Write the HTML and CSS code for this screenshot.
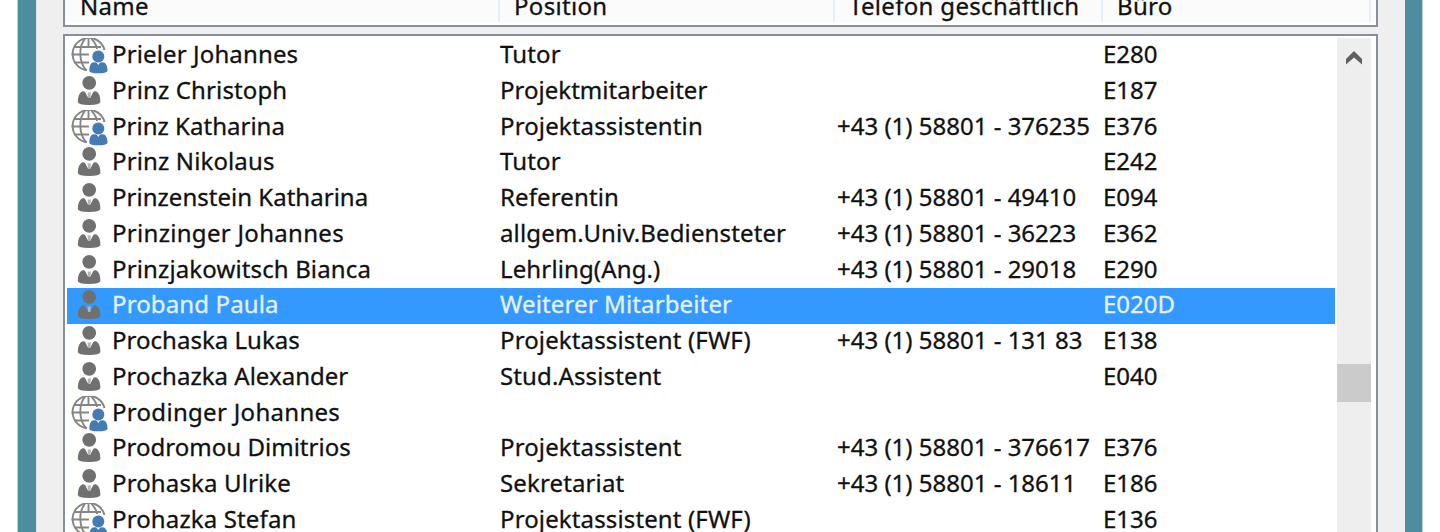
FILE: index.html
```
<!DOCTYPE html>
<html lang="de">
<head>
<meta charset="utf-8">
<title>Adressbuch</title>
<link rel="stylesheet" href="styles.css">
</head>
<body>
<svg class="symbols" width="0" height="0">
  <symbol id="person" viewBox="0 0 40 36">
    <circle cx="19.200" cy="8.800" r="6.900" fill="#707070"/>
    <path d="M12.500 17.300 Q14.500 16.900 15.300 18.500 L18 23.500 H20.400 L23 18.500 Q24 16.900 26 17.300 Q30.400 19.500 30.400 28 Q29.800 31 19.200 31 Q8.200 31 7.800 28 Q7.800 19.500 12.500 17.300Z" fill="#707070"/>
    <path d="M17.500 18.500 H21 L20.300 24 H18.200Z" fill="#b5b5b5"/>
  </symbol>
  <symbol id="contact" viewBox="0 0 40 36">
    <g fill="none" stroke="#858585" stroke-width="1.900">
      <path d="M34.500 12 A16.200 16.200 0 1 0 17 32.200"/>
      <path d="M15 0.800 C8.500 8 8.500 24 16.500 32.500 M21.500 0.800 Q26.500 6 27 11 M18.500 0.500 V10"/>
      <path d="M5 9 H31 M1.500 16.500 H19 M4.500 24.500 H19"/>
    </g>
    <circle cx="28.300" cy="18.600" r="6" fill="#447bb3"/>
    <path d="M22.500 24.500 Q25 24 26.500 24.500 L28.300 27 L30.200 24.500 Q32 24 34 24.500 Q37.500 26 37.500 33 Q36.500 35.300 28.300 35.300 Q20 35.300 19.300 33 Q19.300 26 22.500 24.500Z" fill="#447bb3"/>
  </symbol>
</svg>
<div class="window">
  <div class="header">
    <span>Name</span><span>Position</span><span>Telefon geschäftlich</span><span>Büro</span>
  </div>
  <div class="list">
    <div class="rows">
      <div class="row"><svg class="icon"><use href="#contact"/></svg><span>Prieler Johannes</span><span>Tutor</span><span></span><span class="num">E280</span></div>
      <div class="row"><svg class="icon"><use href="#person"/></svg><span>Prinz Christoph</span><span class="tight">Projektmitarbeiter</span><span></span><span class="num">E187</span></div>
      <div class="row"><svg class="icon"><use href="#contact"/></svg><span class="tight">Prinz Katharina</span><span>Projektassistentin</span><span class="num">+43 (1) 58801 - 376235</span><span class="num">E376</span></div>
      <div class="row"><svg class="icon"><use href="#person"/></svg><span>Prinz Nikolaus</span><span>Tutor</span><span></span><span class="num">E242</span></div>
      <div class="row"><svg class="icon"><use href="#person"/></svg><span class="tight">Prinzenstein Katharina</span><span>Referentin</span><span class="num">+43 (1) 58801 - 49410</span><span class="num">E094</span></div>
      <div class="row"><svg class="icon"><use href="#person"/></svg><span class="wide">Prinzinger Johannes</span><span>allgem.Univ.Bediensteter</span><span class="num">+43 (1) 58801 - 36223</span><span class="num">E362</span></div>
      <div class="row"><svg class="icon"><use href="#person"/></svg><span>Prinzjakowitsch Bianca</span><span>Lehrling(Ang.)</span><span class="num">+43 (1) 58801 - 29018</span><span class="num">E290</span></div>
      <div class="row selected"><svg class="icon"><use href="#person"/></svg><span>Proband Paula</span><span>Weiterer Mitarbeiter</span><span></span><span class="num">E020D</span></div>
      <div class="row"><svg class="icon"><use href="#person"/></svg><span class="tight">Prochaska Lukas</span><span>Projektassistent (FWF)</span><span class="num">+43 (1) 58801 - 131 83</span><span class="num">E138</span></div>
      <div class="row"><svg class="icon"><use href="#person"/></svg><span class="tight">Prochazka Alexander</span><span>Stud.Assistent</span><span></span><span class="num">E040</span></div>
      <div class="row"><svg class="icon"><use href="#contact"/></svg><span class="wide">Prodinger Johannes</span><span></span><span></span><span></span></div>
      <div class="row"><svg class="icon"><use href="#person"/></svg><span class="tight">Prodromou Dimitrios</span><span>Projektassistent</span><span class="num">+43 (1) 58801 - 376617</span><span class="num">E376</span></div>
      <div class="row"><svg class="icon"><use href="#person"/></svg><span>Prohaska Ulrike</span><span>Sekretariat</span><span class="num">+43 (1) 58801 - 18611</span><span class="num">E186</span></div>
      <div class="row"><svg class="icon"><use href="#contact"/></svg><span>Prohazka Stefan</span><span>Projektassistent (FWF)</span><span></span><span class="num">E136</span></div>
    </div>
    <div class="scrollbar">
      <svg class="arrow" viewBox="0 0 16 14"><path d="M0 8 L8 0 L16 8 V13.500 L8 6.500 L0 13.500Z" fill="#606060"/></svg>
      <div class="thumb"></div>
    </div>
  </div>
</div>
</body>
</html>
```
FILE: styles.css
```
* { box-sizing: border-box; }
body {
  margin: 0; height: 532px; overflow: hidden; background: #fff;
  font: 24px/36px "Noto Sans", "Open Sans", sans-serif; color: #111;
  letter-spacing: 0.13px; -webkit-text-stroke: 0.3px currentColor;
}
.symbols { display: block; height: 0; }
.window {
  width: 1404px; height: 532px; margin-left: 18px;
  display: flex; flex-direction: column; gap: 7px;
  padding: 0 27px;
  border: solid #4c8d9f; border-width: 0 17px 0 18px;
  background: #efefef;
  box-shadow: 0 0 0 1px #b9d0d7, inset 1px 0 #dce6e9;
}
.header {
  height: 27px; flex: none; overflow: hidden;
  display: grid; grid-template-columns: 435px 335px 268px 268px;
  border: 2px solid #898f98; border-top: 0;
  background: linear-gradient(#fbfbfc 22px, #fff 22px);
  letter-spacing: 0.32px;
}
.header span {
  height: 22px; padding-left: 14px;
  border-right: 2px solid #e6eff9;
  display: flex; align-items: flex-end; line-height: 33px; white-space: nowrap;
}
.header span:nth-child(1) { padding-left: 15px; }
.list {
  flex: none; height: 520px; overflow: hidden;
  display: flex; justify-content: space-between;
  border: 2px solid #898f98; background: #fff;
  padding: 2px 5px 0 2px;
}
.rows { width: 1268px; }
.row {
  height: 35.770px; display: grid;
  grid-template-columns: 45px 388px 337px 266px 1fr;
  line-height: 31px; white-space: nowrap;
}
.row .num { letter-spacing: 0; }
.row .tight { letter-spacing: 0.020px; }
.row .wide { letter-spacing: 0.300px; }
.selected { background: #3399ff; color: #e6f1ff; }
.icon { width: 40px; height: 36px; margin-left: 3px; }
.scrollbar { width: 34px; background: #eeeeee; display: flex; flex-direction: column; align-items: center; }
.arrow { width: 16px; height: 14px; margin-top: 13px; }
.thumb { width: 34px; height: 38px; margin-top: 299px; background: #cbcbcb; }
```
